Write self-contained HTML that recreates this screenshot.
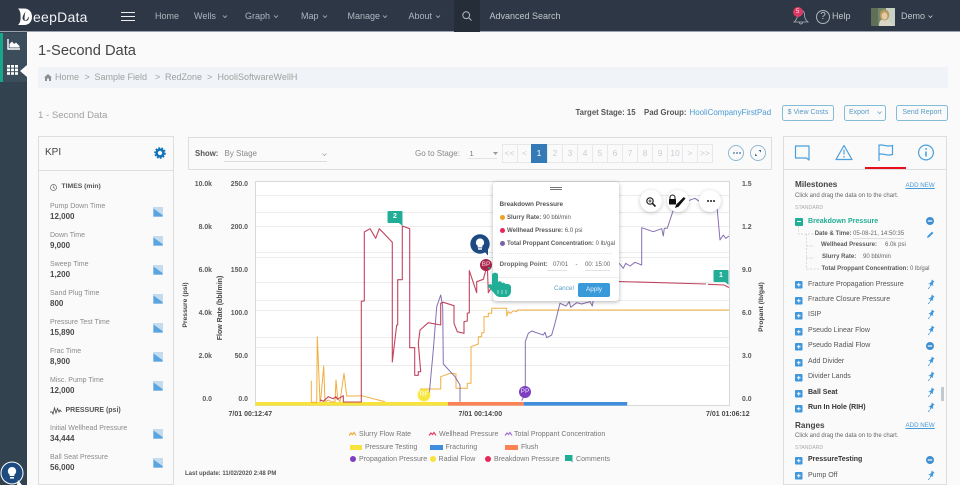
<!DOCTYPE html>
<html>
<head>
<meta charset="utf-8">
<style>
html,body{margin:0;padding:0;width:960px;height:485px;overflow:hidden;background:#fafafa;font-family:"Liberation Sans",sans-serif;color:#555}
.a,.t,.b{position:absolute}
.t{white-space:nowrap;line-height:10px;height:10px;margin-top:.5px}
.b{font-weight:bold}
.n{color:#aeb6bf;font-size:9px}
.kl{font-size:7px;color:#8a8a8a;left:50px}
.kv{font-size:8px;color:#4a4a4a;left:50px;font-weight:bold}
.ax{font-size:6.9px;font-weight:bold;color:#5a5a5a;text-align:right;width:40px}
.li{font-size:7px;color:#555;left:808px}
.lg{font-size:7.05px;color:#777}
.sm{font-size:6.05px;color:#5a5a5a}
.pg{position:absolute;top:145px;height:17px;line-height:17px;width:14px;text-align:center;font-size:8.5px;color:#c9ced3;border:1px solid #e6e8ea;box-sizing:content-box;background:#fafafa;margin-top:-1px}
.btn{position:absolute;top:105px;height:14px;line-height:14px;border:1px solid #84bcd6;border-radius:2.5px;font-size:7px;color:#5b9cc4;text-align:center;box-sizing:content-box}
.rd{position:absolute;border-radius:50%;background:#fff;box-shadow:0 1px 4px rgba(0,0,0,.22);width:22px;height:22px;top:190px}
.g{position:absolute;left:256px;width:473px;height:1px;background:#ececec}
svg{position:absolute;overflow:visible}
</style>
</head>
<body>
<svg width="0" height="0" style="position:absolute">
<defs>
<symbol id="ci" viewBox="0 0 10 10"><rect width="10" height="10" fill="#c5dcef"/><path d="M0.5 1.5L9.5 8V9.5H0.5Z" fill="#5aa5e0"/></symbol>
<symbol id="pl" viewBox="0 0 8 8"><rect width="8" height="8" rx="1" fill="#3f97dc"/><path d="M2 4H6M4 2V6" stroke="#fff" stroke-width="1"/></symbol>
<symbol id="pin" viewBox="0 0 8 10"><path d="M4.5 0.5L7.6 2.6L6.3 3.4L5.8 6L6.5 7L4.6 6.1L2.6 8.5L3.4 5.4L1 4.6L2.8 4.2L4.6 2.2Z" fill="#3f97dc"/><path d="M2.6 8.3L1 10" stroke="#3f97dc" stroke-width=".8"/></symbol>
<symbol id="mn" viewBox="0 0 8 8"><circle cx="4" cy="4" r="4" fill="#3f8fd0"/><rect x="1.8" y="3.4" width="4.4" height="1.2" fill="#fff"/></symbol>
</defs>
</svg>

<!-- sidebar -->
<div class="a" style="left:0;top:32px;width:27px;height:453px;background:#33424f"></div>
<div class="a" style="left:0;top:33px;width:3px;height:49px;background:#17a689"></div>
<div class="a" style="left:3px;top:33px;width:24px;height:49px;background:#3b4c5b"></div>
<svg style="left:7px;top:39px" width="14" height="11" viewBox="0 0 14 11"><path d="M1 0V10H13" fill="none" stroke="#fff" stroke-width="1.4"/><path d="M2.5 8.5V5L5 2.5L7 5L9 3.5L12.5 7V8.5Z" fill="#fff"/></svg>
<svg style="left:7px;top:65px" width="11" height="10" viewBox="0 0 11 10"><g fill="#fff"><rect width="3" height="2.6"/><rect x="4" width="3" height="2.6"/><rect x="8" width="3" height="2.6"/><rect y="3.6" width="3" height="2.6"/><rect x="4" y="3.6" width="3" height="2.6"/><rect x="8" y="3.6" width="3" height="2.6"/><rect y="7.2" width="3" height="2.6"/><rect x="4" y="7.2" width="3" height="2.6"/><rect x="8" y="7.2" width="3" height="2.6"/></g></svg>
<div class="a" style="left:20px;top:65px;width:0;height:0;border-top:6px solid transparent;border-bottom:6px solid transparent;border-right:7px solid #fafafa"></div>
<svg style="left:0;top:461px" width="24" height="24" viewBox="0 0 24 24"><circle cx="12" cy="12" r="11" fill="#1d4a80" stroke="#fff" stroke-width="1"/><path d="M18 19L22 24H17Z" fill="#fff"/><path d="M12 6a4.2 4.2 0 0 0-2.4 7.6V15h4.8v-1.4A4.2 4.2 0 0 0 12 6Z" fill="#fff"/><rect x="10" y="16" width="4" height="1.6" fill="#fff"/></svg>

<!-- nav -->
<div class="a" style="left:0;top:0;width:960px;height:32px;background:#2d3745;border-bottom:1px solid #9aa3ad;box-sizing:border-box"></div>
<div class="a" style="left:454px;top:0;width:26px;height:32px;background:#252d38"></div>
<svg style="left:17px;top:8px" width="16" height="18" viewBox="0 0 16 18"><path d="M1 0.5H7C12 0.5 15 4 15 8.7C15 13.5 12 17 7 17H1C3 15 3.6 13 3.6 9C3.6 4.5 3 2.5 1 0.5Z" fill="#fff"/><path d="M8.5 3.5C7 6 5.5 8 5.5 10.3A3.2 3.2 0 0 0 11.8 10.3C11.8 9.6 11.6 9 11.3 8.4C11 10.8 9.8 12.2 8 12.4C7 11 7.8 6 8.5 3.5Z" fill="#2d3745"/></svg>
<div class="t" style="left:33px;top:10.5px;font-size:14px;line-height:12px;height:12px;color:#f2f4f6;letter-spacing:.25px">eepData</div>
<div class="a" style="left:121px;top:11.5px;width:14px;height:1.6px;background:#eee"></div>
<div class="a" style="left:121px;top:15.5px;width:14px;height:1.6px;background:#eee"></div>
<div class="a" style="left:121px;top:19.5px;width:14px;height:1.6px;background:#eee"></div>
<div class="t n" style="left:155px;top:10.5px">Home</div>
<div class="t n" style="left:194px;top:10.5px">Wells</div>
<div class="t n" style="left:245px;top:10.5px">Graph</div>
<div class="t n" style="left:301px;top:10.5px">Map</div>
<div class="t n" style="left:347.5px;top:10.5px">Manage</div>
<div class="t n" style="left:408.5px;top:10.5px">About</div>
<svg style="left:222px;top:14.5px" width="220" height="4" fill="none" stroke="#aeb6bf" stroke-width=".8"><path d="M1 .5L3 2.5L5 .5M52 .5L54 2.5L56 .5M101 .5L103 2.5L105 .5M161 .5L163 2.5L165 .5M214 .5L216 2.5L218 .5"/></svg>
<svg style="left:462px;top:11px" width="10" height="10" fill="none" stroke="#b5bcc4" stroke-width="1"><circle cx="4.2" cy="4.2" r="3.4"/><path d="M6.8 6.8L9.5 9.5"/></svg>
<div class="t n" style="left:489.5px;top:10.5px;color:#c0c6cc">Advanced Search</div>
<svg style="left:793px;top:7px" width="16" height="17" viewBox="0 0 16 17" fill="none" stroke="#aeb6bf" stroke-width=".8"><path d="M4.5 8C4.5 5 6 3.5 8 3.5S11.5 5 11.5 8C11.5 11 12.5 13 15 15H1C3.5 13 4.5 11 4.5 8Z"/><path d="M6.5 15.5A1.5 1.5 0 0 0 9.5 15.5"/></svg>
<div class="a" style="left:792.5px;top:6.5px;width:10px;height:10px;border-radius:50%;background:#dc3a63;color:#ffd9e2;font-size:6.5px;line-height:10px;text-align:center">5</div>
<div class="a" style="left:816px;top:9.5px;width:12px;height:12px;border:1px solid #aeb6bf;border-radius:50%;color:#c0c6cc;font-size:10px;line-height:12px;text-align:center">?</div>
<div class="t n" style="left:832px;top:10.5px;color:#c0c6cc">Help</div>
<svg style="left:871px;top:8px" width="24" height="18" viewBox="0 0 24 18"><rect width="24" height="18" fill="#74876a"/><rect x="15" width="9" height="18" fill="#c9d0c4"/><rect y="0" width="7" height="18" fill="#5f6f58"/><path d="M8 18C8 13 10 11 13 11S20 13 22 18Z" fill="#dcd8c6"/><ellipse cx="13.5" cy="7" rx="4.8" ry="5.5" fill="#b49a5e"/><ellipse cx="13.5" cy="8" rx="3" ry="3.8" fill="#e5c8a6"/></svg>
<div class="t n" style="left:901px;top:10.5px;color:#c0c6cc">Demo</div>
<svg style="left:928px;top:14.5px" width="6" height="4" fill="none" stroke="#c0c6cc" stroke-width=".8"><path d="M.5 .5L2.5 2.5L4.5 .5"/></svg>

<!-- title -->
<div class="t" style="left:38px;top:41.5px;font-size:14.7px;line-height:18px;height:18px;color:#444">1-Second Data</div>
<div class="a" style="left:37.5px;top:67px;width:910px;height:21px;background:#f0f3f7"></div>
<svg style="left:44px;top:74px" width="8" height="7" viewBox="0 0 8 7"><path d="M4 0L8 3.5H7V7H5V4.5H3V7H1V3.5H0Z" fill="#8f8f8f"/></svg>
<div class="t" style="left:55px;top:71.5px;font-size:9px;color:#a0a0a0">Home</div>
<div class="t" style="left:84.5px;top:71.5px;font-size:9px;color:#a0a0a0">&gt;</div>
<div class="t" style="left:94.5px;top:71.5px;font-size:9px;color:#a0a0a0">Sample Field</div>
<div class="t" style="left:155px;top:71.5px;font-size:9px;color:#a0a0a0">&gt;</div>
<div class="t" style="left:165px;top:71.5px;font-size:9px;color:#a0a0a0">RedZone</div>
<div class="t" style="left:207px;top:71.5px;font-size:9px;color:#a0a0a0">&gt;</div>
<div class="t" style="left:217.5px;top:71.5px;font-size:9px;color:#a0a0a0">HooliSoftwareWellH</div>
<div class="t" style="left:38px;top:110.5px;font-size:9.6px;color:#a0a0a0">1 - Second Data</div>

<div class="t b" style="left:575.5px;top:107.5px;font-size:7.8px;color:#555">Target Stage: 15</div>
<div class="t b" style="left:644px;top:107.5px;font-size:7.8px;color:#555">Pad Group:</div>
<div class="t" style="left:689.5px;top:107.5px;font-size:7.95px;color:#4a9ad4">HooliCompanyFirstPad</div>
<div class="btn" style="left:782px;width:50px">$ View Costs</div>
<div class="btn" style="left:844px;width:40px;text-align:left;text-indent:4px">Export</div>
<svg style="left:877px;top:111px" width="6" height="4" fill="none" stroke="#6fa9cc" stroke-width=".8"><path d="M.5 .5L2.5 2.5L4.5 .5"/></svg>
<div class="btn" style="left:896px;width:50px">Send Report</div>

<!-- KPI -->
<div class="a" style="left:37.5px;top:136px;width:136px;height:349px;border:1px solid #dedede;box-sizing:border-box;background:#fafafa"></div>
<div class="a" style="left:38px;top:170px;width:135px;height:1px;background:#dedede"></div>
<div class="t" style="left:45px;top:147px;font-size:10px;color:#444">KPI</div>
<svg style="left:154px;top:147px" width="12" height="12" viewBox="0 0 12 12"><circle cx="6" cy="6" r="3.4" fill="none" stroke="#0d72b9" stroke-width="2.4"/><circle cx="6" cy="6" r="5" fill="none" stroke="#0d72b9" stroke-width="1.6" stroke-dasharray="1.8 1.3"/></svg>
<svg style="left:49.5px;top:183.5px" width="7" height="7" fill="none" stroke="#666" stroke-width=".7"><circle cx="3.5" cy="3.5" r="3"/><path d="M3.5 1.7V3.7L5 4.4"/></svg>
<div class="t b" style="left:61.5px;top:181.5px;font-size:6.8px;color:#555">TIMES (min)</div>
<div class="t kl" style="top:201px">Pump Down Time</div><div class="t kv" style="top:211.5px">12,000</div>
<div class="t kl" style="top:230px">Down Time</div><div class="t kv" style="top:240px">9,000</div>
<div class="t kl" style="top:259px">Sweep Time</div><div class="t kv" style="top:269px">1,200</div>
<div class="t kl" style="top:288px">Sand Plug Time</div><div class="t kv" style="top:298px">800</div>
<div class="t kl" style="top:317px">Pressure Test Time</div><div class="t kv" style="top:327px">15,890</div>
<div class="t kl" style="top:346px">Frac Time</div><div class="t kv" style="top:356px">8,900</div>
<div class="t kl" style="top:375px">Misc. Pump Time</div><div class="t kv" style="top:385px">12,000</div>
<svg style="left:50px;top:407px" width="12" height="8" fill="none" stroke="#555" stroke-width=".9"><path d="M0 5L2 5L3 7L4.5 1L6 6L7.5 1.5L9 5L10 3L11.5 5"/></svg>
<div class="t b" style="left:65.5px;top:405.5px;font-size:7px;color:#555">PRESSURE (psi)</div>
<div class="t kl" style="top:423.5px">Initial Wellhead Pressure</div><div class="t kv" style="top:433.5px">34,444</div>
<div class="t kl" style="top:452.5px">Ball Seat Pressure</div><div class="t kv" style="top:462.5px">56,000</div>
<svg style="left:153px;top:207px" width="10" height="10"><use href="#ci"/></svg>
<svg style="left:153px;top:236px" width="10" height="10"><use href="#ci"/></svg>
<svg style="left:153px;top:265px" width="10" height="10"><use href="#ci"/></svg>
<svg style="left:153px;top:294px" width="10" height="10"><use href="#ci"/></svg>
<svg style="left:153px;top:323px" width="10" height="10"><use href="#ci"/></svg>
<svg style="left:153px;top:352px" width="10" height="10"><use href="#ci"/></svg>
<svg style="left:153px;top:381px" width="10" height="10"><use href="#ci"/></svg>
<svg style="left:153px;top:429px" width="10" height="10"><use href="#ci"/></svg>
<svg style="left:153px;top:458px" width="10" height="10"><use href="#ci"/></svg>

<!-- chart toolbar -->
<div class="a" style="left:188px;top:136.5px;width:584px;height:33px;border:1px solid #dedede;box-sizing:border-box"></div>
<div class="t b" style="left:195px;top:148px;font-size:7.8px;color:#555">Show:</div>
<div class="t" style="left:224.5px;top:148px;font-size:8px;color:#888">By Stage</div>
<div class="a" style="left:224px;top:161px;width:103px;height:1px;background:#ddd"></div>
<svg style="left:322px;top:153px" width="6" height="4" fill="none" stroke="#aaa" stroke-width=".8"><path d="M.5 .5L2.5 2.5L4.5 .5"/></svg>
<div class="t" style="left:415px;top:148px;font-size:8px;color:#888">Go to Stage:</div>
<div class="t" style="left:469.5px;top:148px;font-size:7.5px;color:#777">1</div>
<div class="a" style="left:468px;top:157.5px;width:29px;height:1px;background:#e5e5e5"></div>
<svg style="left:493px;top:152px" width="5" height="3"><path d="M0 0H5L2.5 3Z" fill="#999"/></svg>
<div class="pg" style="left:501.5px">&lt;&lt;</div>
<div class="pg" style="left:516.5px">&lt;</div>
<div class="pg" style="left:531px;background:#337ab7;border-color:#337ab7;color:#fff">1</div>
<div class="pg" style="left:547px">2</div>
<div class="pg" style="left:562px">3</div>
<div class="pg" style="left:577px">4</div>
<div class="pg" style="left:592px">5</div>
<div class="pg" style="left:607px">6</div>
<div class="pg" style="left:622px">7</div>
<div class="pg" style="left:637px">8</div>
<div class="pg" style="left:652px">9</div>
<div class="pg" style="left:667px">10</div>
<div class="pg" style="left:682px">&gt;</div>
<div class="pg" style="left:697px">&gt;&gt;</div>
<div class="a" style="left:728px;top:145px;width:16px;height:16px;border:1px solid #8fb8d2;border-radius:50%;box-sizing:border-box"></div>
<svg style="left:733px;top:152px" width="8" height="2"><g fill="#3a6f9a"><circle cx="1" cy="1" r=".9"/><circle cx="4" cy="1" r=".9"/><circle cx="7" cy="1" r=".9"/></g></svg>
<div class="a" style="left:750px;top:145px;width:16px;height:16px;border:1px solid #8fb8d2;border-radius:50%;box-sizing:border-box"></div>
<svg style="left:755px;top:150px" width="6" height="6" fill="#3a6f9a"><path d="M6 0V2.5L3.5 0ZM0 6V3.5L2.5 6Z"/></svg>

<!-- plot -->
<div class="a" style="left:255px;top:180.5px;width:474.5px;height:225px;border:1px solid #d8d8d8;box-sizing:border-box;background:#fff"></div>
<div class="g" style="top:195px"></div><div class="g" style="top:212px"></div><div class="g" style="top:226px"></div><div class="g" style="top:252px"></div><div class="g" style="top:257px"></div><div class="g" style="top:282px"></div><div class="g" style="top:300px"></div><div class="g" style="top:310px"></div><div class="g" style="top:337px"></div><div class="g" style="top:347px"></div><div class="g" style="top:365px"></div>

<svg style="left:0;top:0" width="960" height="485" fill="none" stroke-linejoin="round">
<rect x="255.5" y="402" width="192.5" height="3.6" fill="#f7e33c"/>
<rect x="448" y="402" width="75.7" height="3.6" fill="#f98354"/>
<rect x="523.7" y="402" width="103.5" height="3.6" fill="#3f8ddc"/>
<g stroke="#f0a52a" stroke-width="1" stroke-opacity=".9">
<polyline points="311.3,380.7 311.3,402.3 316.7,402.3 317.3,336.7 320,401.7 321,396.7 323.7,366 325,401.7 328.3,400 331.7,402 335,401.7 336,380 337.7,398.3 340,401.7 344,373.3 346.7,396 355,396 361.7,395.7 371.7,398.3 385,401.7"/>
<polyline points="420,389 440.7,389 440.7,376.7 450,373.3 456,374 456,388.3 467.3,388.3 467.3,383.3 471,383.3 471,346.7 478.3,344 478.3,336.7 481.7,336.7 481.7,332.7 484,332.7 484,316.7 488.3,316.7 488.3,313.3 491.7,313.3 491.7,308.3 506.7,308.3 506.7,316 508.3,311.7 510.7,313.3 513.3,310.7 516.7,311.7 517.3,310 729,310"/>
</g>
<g stroke="#7a5fa8" stroke-width="1" stroke-opacity=".9">
<polyline points="429.3,393.3 433.3,350 436.7,306.7 440.7,295 442.7,306.7 443.3,364 455,376.7 460,385 460,401.7"/>
<polyline points="521.7,400.7 525.3,393.3 525.3,341.7 528.3,333.3 531.7,331 538.3,333.3 543.3,335 545,332.3 546.7,337.7 551.7,335 555,323.3 558.3,310 560,303.3 566,306 569.3,301.7 570.7,307.3 576.7,302.7 581.7,304 590,301.7 592.3,306 593.3,300"/>
<polyline points="619.3,263.3 623.3,268.3 625.7,263.3 630,266 635,262.3 641.7,265 641.7,227.7 653.3,231.7 661.7,228.7 663.3,236 664.3,228.3 667.3,228.3 673.3,210 680,197 688.3,200.7 695,198.3 698.3,200.7 717.3,201.7 717.3,210 720,240 723.3,235 725.7,238.3 729,236"/>
</g>
<g stroke="#bb3050" stroke-width="1.1" stroke-opacity=".9">
<polyline points="320,401.3 320.7,400 323.3,401.3 328.3,396.7 333.3,398.7 336,396.7 337.3,399.3 341.7,396.7 343.3,395.7 343.3,402 361.3,402 361.3,301.3 364.3,301 364.3,232 370,228.7 375.7,238.3 379.3,228.7 392.3,242.3 392.3,362 395.7,333.3 396.7,325 397.7,325 397.7,279.7 402.3,279.7 402.3,226 409.7,228.7 409.7,347.7 414.7,347.7 414.7,375.3 418.3,375.3 418.3,371.7 420.7,371.7 418.3,343.3 420,330 428.3,322.7 440.7,325 440.7,303.3 443.3,302.3 454,305.7 454,323.3 457.3,331.7 464,333.3 464,321.7 467.3,321 467.3,313.3 469.3,312.7 469.3,270.7 476.7,292.7 476.7,281.7 483.3,279.3 487.3,265 488.3,292.7 491.7,286.7"/>
<polyline points="619,281.5 706,284"/>
<polyline points="708,284.3 724,285 729,287.5"/>
</g>
</svg>

<!-- markers -->
<svg style="left:387px;top:211px" width="16" height="16"><path d="M1.5 0H14.5A1 1 0 0 1 15.5 1V15L12 12H1.5A1 1 0 0 1 .5 11V1A1 1 0 0 1 1.5 0Z" fill="#21ad96"/></svg>
<div class="a b" style="left:388px;top:212px;width:14px;line-height:10px;font-size:7px;color:#fff;text-align:center">2</div>
<svg style="left:713px;top:270px" width="16" height="16"><path d="M1.5 0H14.5A1 1 0 0 1 15.5 1V15L12 12H1.5A1 1 0 0 1 .5 11V1A1 1 0 0 1 1.5 0Z" fill="#21ad96"/></svg>
<div class="a b" style="left:714px;top:271px;width:14px;line-height:10px;font-size:7px;color:#fff;text-align:center">1</div>
<div class="a" style="left:418px;top:389px;width:12px;height:12px;border-radius:50%;background:#f7e63c;box-shadow:0 0 2px #f7e63c;color:#fff;font-size:6.5px;line-height:12px;text-align:center">RF</div>
<div class="a" style="left:519px;top:386px;width:12px;height:12px;border-radius:50%;background:#7d3fc0;color:#ecdfff;font-size:6.5px;line-height:12px;text-align:center">PP</div>
<div class="a" style="left:480px;top:259px;width:12px;height:12px;border-radius:50%;background:#a8244a;color:#f5d5de;font-size:6.5px;line-height:12px;text-align:center">BP</div>
<svg style="left:470px;top:234px" width="21" height="22" viewBox="0 0 21 22"><circle cx="10" cy="10" r="9.7" fill="#1d4a80"/><path d="M14 17L18 21.5V15Z" fill="#1d4a80"/><path d="M10 4.5a4 4 0 0 0-2.3 7.3V13.5h4.6V11.8A4 4 0 0 0 10 4.5Z" fill="#fff"/><rect x="8" y="14.2" width="4" height="1.5" fill="#fff"/></svg>

<!-- axes -->
<div class="t ax" style="left:172px;top:179px">10.0k</div><div class="t ax" style="left:172px;top:222px">8.0k</div><div class="t ax" style="left:172px;top:265px">6.0k</div><div class="t ax" style="left:172px;top:308px">4.0k</div><div class="t ax" style="left:172px;top:351px">2.0k</div><div class="t ax" style="left:172px;top:394px">0.0</div>
<div class="t ax" style="left:208px;top:179px">250.0</div><div class="t ax" style="left:208px;top:222px">200.0</div><div class="t ax" style="left:208px;top:265px">150.0</div><div class="t ax" style="left:208px;top:308px">100.0</div><div class="t ax" style="left:208px;top:351px">50.0</div><div class="t ax" style="left:208px;top:394px">0.0</div>
<div class="t ax" style="left:742px;top:179px;text-align:left">1.5</div><div class="t ax" style="left:742px;top:222.5px;text-align:left">1.2</div><div class="t ax" style="left:742px;top:265.5px;text-align:left">9.0</div><div class="t ax" style="left:742px;top:308px;text-align:left">6.0</div><div class="t ax" style="left:742px;top:351.5px;text-align:left">3.0</div><div class="t ax" style="left:742px;top:394.5px;text-align:left">0.0</div>
<div class="t b" style="left:155.5px;top:299px;width:60px;text-align:center;font-size:6.8px;color:#444;transform:rotate(-90deg)">Pressure (psi)</div>
<div class="t b" style="left:181px;top:302px;width:80px;text-align:center;font-size:7px;color:#444;transform:rotate(-90deg)">Flow Rate (bbl/min)</div>
<div class="t b" style="left:731.5px;top:301px;width:60px;text-align:center;font-size:6.8px;color:#444;transform:rotate(-90deg)">Propant (lb/gal)</div>
<div class="t b" style="left:228.5px;top:409px;font-size:7px;color:#484848">7/01 00:12:47</div>
<div class="t b" style="left:458.5px;top:409px;font-size:7px;color:#484848">7/01 00:14:00</div>
<div class="t b" style="left:706px;top:409px;font-size:7px;color:#484848">7/01 01:06:12</div>

<!-- legend -->
<svg style="left:348px;top:431px" width="170" height="6" fill="none" stroke-width="1.1"><path d="M1 4.5L3 2L4.5 3.5L6 1.5L8 4.5" stroke="#f0a52a"/><path d="M81 4.5L83 2L84.5 3.5L86 1.5L88 4.5" stroke="#e6325c"/><path d="M157 4.5L159 2L160.5 3.5L162 1.5L164 4.5" stroke="#9b6ad0"/></svg>
<div class="t lg" style="left:359px;top:429px">Slurry Flow Rate</div>
<div class="t lg" style="left:439px;top:429px">Wellhead Pressure</div>
<div class="t lg" style="left:514px;top:429px">Total Proppant Concentration</div>
<div class="a" style="left:350px;top:445px;width:12px;height:5px;background:#f7e33c"></div>
<div class="a" style="left:430px;top:445px;width:13px;height:5px;background:#3f8ddc"></div>
<div class="a" style="left:505px;top:445px;width:13px;height:5px;background:#f98354"></div>
<div class="t lg" style="left:365px;top:442px">Pressure Testing</div>
<div class="t lg" style="left:445.5px;top:442px">Fracturing</div>
<div class="t lg" style="left:521px;top:442px">Flush</div>
<div class="a" style="left:350px;top:456px;width:6px;height:6px;border-radius:50%;background:#7d3fc0"></div>
<div class="a" style="left:430px;top:456px;width:6px;height:6px;border-radius:50%;background:#f7e33c"></div>
<div class="a" style="left:485px;top:456px;width:6px;height:6px;border-radius:50%;background:#e8265a"></div>
<svg style="left:565px;top:455px" width="8" height="8"><path d="M0 0H7.5V7.5L6 6H0Z" fill="#21ad96"/></svg>
<div class="t lg" style="left:359px;top:454px">Propagation Pressure</div>
<div class="t lg" style="left:438.5px;top:454px">Radial Flow</div>
<div class="t lg" style="left:494px;top:454px">Breakdown Pressure</div>
<div class="t lg" style="left:576px;top:454px">Comments</div>
<div class="t b" style="left:185px;top:468px;font-size:6px;color:#555">Last update: 11/02/2020 2:48 PM</div>

<!-- tooltip -->
<div class="a" style="left:492.5px;top:181.5px;width:126.5px;height:119px;background:#fff;border-radius:3px;box-shadow:0 1px 4px rgba(0,0,0,.3)"></div>
<div class="a" style="left:550px;top:187px;width:12px;height:2.6px;border-top:.8px solid #777;border-bottom:.8px solid #777;box-sizing:border-box"></div>
<div class="t b" style="left:499.5px;top:199px;font-size:6.4px;color:#555">Breakdown Pressure</div>
<div class="a" style="left:499.5px;top:215px;width:5px;height:5px;border-radius:50%;background:#f0a020"></div>
<div class="a" style="left:499.5px;top:228px;width:5px;height:5px;border-radius:50%;background:#e8265a"></div>
<div class="a" style="left:499.5px;top:241px;width:5px;height:5px;border-radius:50%;background:#7a5fa8"></div>
<div class="t sm" style="left:507px;top:212px"><b>Slurry Rate:</b> 90 bbl/min</div>
<div class="t sm" style="left:507px;top:225px"><b>Wellhead Pressure:</b> 6.0 psi</div>
<div class="t sm" style="left:507px;top:238px"><b>Total Proppant Concentration:</b> 0 lb/gal</div>
<div class="a" style="left:499px;top:253px;width:113px;border-top:1px dotted #e3e3e3"></div>
<div class="t b" style="left:499.5px;top:259px;font-size:6.4px;color:#666">Dropping Point:</div>
<div class="t sm" style="left:553px;top:259px;color:#666">07/01</div>
<div class="t sm" style="left:575.5px;top:259px;color:#666">-</div>
<div class="t sm" style="left:585px;top:259px;color:#666">00: 15:00</div>
<div class="a" style="left:547px;top:270px;width:20px;height:1px;background:#e2e2e2"></div>
<div class="a" style="left:585px;top:270px;width:25px;height:1px;background:#e2e2e2"></div>
<div class="a" style="left:493px;top:277px;width:126px;height:1px;background:#eee"></div>
<div class="t" style="left:554px;top:283.5px;font-size:6.4px;color:#5a9fc8">Cancel</div>
<div class="a" style="left:578px;top:282.5px;width:32px;height:14px;background:#3a9ad9;border-radius:2px;color:#e8f4fc;font-size:6.4px;line-height:14px;text-align:center">Apply</div>
<svg style="left:487px;top:268px" width="26" height="30" viewBox="0 0 26 30"><path d="M5 7C5 4 11 4 11 7V14C12.5 12.5 14.5 13.5 15 15C16.5 14 18 15 18.5 16C20 15.5 24 16 24 19V23C24 26 22 29 18.5 29H13C10 29 8.5 27 7 25L1.5 19C.5 17 3 15 5 17Z" fill="#21ad96"/><path d="M11 22V26M15 22V26M19 22V26" stroke="#bfe8df" stroke-width=".8"/><path d="M1 0H3M2 -1V1" stroke="#21ad96"/></svg>

<!-- round buttons -->
<div class="rd" style="left:639.5px"></div>
<div class="rd" style="left:667px"></div>
<div class="rd" style="left:699px"></div>
<svg style="left:646px;top:197px" width="10" height="10" fill="none" stroke="#222" stroke-width="1.2"><circle cx="4" cy="4" r="3.2"/><path d="M6.5 6.5L9.5 9.5" stroke-width="1.6"/><path d="M2.4 4H5.6M4 2.4V5.6" stroke-width=".8"/></svg>
<svg style="left:669px;top:194px" width="18" height="15" viewBox="0 0 18 15"><path d="M1 5.5V3.5A2.5 2.5 0 0 1 6 3.5V5.5" fill="none" stroke="#111" stroke-width="1"/><rect x="0" y="5" width="7" height="5.5" rx=".6" fill="#111"/><path d="M16.5 4.5L14.8 3L7.2 10.5L6 14L9.5 12.8Z" fill="#111"/></svg>
<svg style="left:706.5px;top:200px" width="8" height="2"><g fill="#222"><circle cx="1" cy="1" r="1"/><circle cx="4" cy="1" r="1"/><circle cx="7" cy="1" r="1"/></g></svg>

<!-- right panel -->
<div class="a" style="left:782.5px;top:136px;width:164px;height:349px;border:1px solid #dedede;box-sizing:border-box;background:#fafafa"></div>
<div class="a" style="left:783px;top:169px;width:163px;height:1px;background:#dedede"></div>
<div class="a" style="left:864.5px;top:167px;width:41px;height:2.2px;background:#e8101c"></div>
<svg style="left:790px;top:143px" width="150" height="20" fill="none" stroke="#4a9fdd" stroke-width="1.2">
<path d="M6 2H19.5V16L17 14H6V2Z" stroke-linejoin="round" transform="translate(-0.5,1)"/>
<path d="M54 2.5L62 16.5H46Z" stroke-linejoin="round"/><path d="M54 6.8V11.5M54 13V14.6"/>
<path d="M89 1.5V18M89 2.5C93 .5 96 4.5 102.5 2.5V11.5C96 13.5 93 9.5 89 11.5"/>
<circle cx="136" cy="9.5" r="7.4"/><path d="M136 8.5V13.5" stroke-width="1.6"/><path d="M136 5.2V6.8" stroke-width="1.6"/>
</svg>
<div class="t b" style="left:795px;top:179.5px;font-size:8.2px;color:#444">Milestones</div>
<div class="t" style="left:905.5px;top:180px;font-size:6.2px;color:#4a9ad4;text-decoration:underline">ADD NEW</div>
<div class="t" style="left:795px;top:190px;font-size:6px;color:#666">Click and drag the data on to the chart.</div>
<div class="t" style="left:795px;top:202.5px;font-size:5.2px;color:#aaa">STANDARD</div>
<div class="a" style="left:795px;top:218px;width:7.5px;height:7.5px;background:#21ad96;border-radius:1px"></div>
<div class="a" style="left:796.5px;top:221.4px;width:4.5px;height:1px;background:#fff"></div>
<div class="t b" style="left:808px;top:216px;font-size:7.05px;color:#21ad96">Breakdown Pressure</div>
<svg style="left:926px;top:217px" width="8" height="8"><use href="#mn"/></svg>
<svg style="left:927px;top:231px" width="7" height="7"><path d="M0 7L.6 5L5 .6L6.4 2L2 6.4Z" fill="#3f97dc"/></svg>
<svg style="left:798px;top:226px" width="26" height="46" fill="none" stroke="#ccc" stroke-width=".7" stroke-dasharray="2 1.5"><path d="M.5 0V8H16M8.5 8V43H22M8.5 20H16M8.5 32H16"/></svg>
<div class="t sm" style="left:814.7px;top:228.2px"><b>Date &amp; Time:</b></div>
<div class="t sm" style="left:853px;top:228.2px;color:#666">05-08-21, 14:50:35</div>
<div class="a" style="left:853px;top:238px;width:51px;height:1px;background:#e0e0e0"></div>
<div class="t sm" style="left:821px;top:239.8px"><b>Wellhead Pressure:</b></div><div class="t sm" style="left:885px;top:239.8px;color:#666">6.0k psi</div>
<div class="t sm" style="left:822px;top:251.8px"><b>Slurry Rate:</b></div><div class="t sm" style="left:863px;top:251.8px;color:#666">90 bbl/min</div>
<div class="t sm" style="left:821.5px;top:263.8px"><b>Total Proppant Concentration:</b></div><div class="t sm" style="left:910px;top:263.8px;color:#666">0 lb/gal</div>

<div class="t li" style="top:279.2px">Fracture Propagation Pressure</div>
<div class="t li" style="top:294.5px">Fracture Closure Pressure</div>
<div class="t li" style="top:309.8px">ISIP</div>
<div class="t li" style="top:325.5px">Pseudo Linear Flow</div>
<div class="t li" style="top:340.8px">Pseudo Radial Flow</div>
<div class="t li" style="top:356.5px">Add Divider</div>
<div class="t li" style="top:371.8px">Divider Lands</div>
<div class="t li" style="top:387.5px;font-weight:bold;color:#333">Ball Seat</div>
<div class="t li" style="top:402.8px;font-weight:bold;color:#333">Run In Hole (RIH)</div>
<svg style="left:795px;top:281px" width="7.5" height="7.5"><use href="#pl"/></svg>
<svg style="left:795px;top:296.5px" width="7.5" height="7.5"><use href="#pl"/></svg>
<svg style="left:795px;top:312px" width="7.5" height="7.5"><use href="#pl"/></svg>
<svg style="left:795px;top:327.5px" width="7.5" height="7.5"><use href="#pl"/></svg>
<svg style="left:795px;top:343px" width="7.5" height="7.5"><use href="#pl"/></svg>
<svg style="left:795px;top:358.5px" width="7.5" height="7.5"><use href="#pl"/></svg>
<svg style="left:795px;top:374px" width="7.5" height="7.5"><use href="#pl"/></svg>
<svg style="left:795px;top:389.5px" width="7.5" height="7.5"><use href="#pl"/></svg>
<svg style="left:795px;top:404.5px" width="7.5" height="7.5"><use href="#pl"/></svg>
<svg style="left:926.5px;top:278.5px" width="8" height="10"><use href="#pin"/></svg>
<svg style="left:926.5px;top:294px" width="8" height="10"><use href="#pin"/></svg>
<svg style="left:926.5px;top:309px" width="8" height="10"><use href="#pin"/></svg>
<svg style="left:926.5px;top:325px" width="8" height="10"><use href="#pin"/></svg>
<svg style="left:926px;top:341.5px" width="8" height="8"><use href="#mn"/></svg>
<svg style="left:926.5px;top:355.5px" width="8" height="10"><use href="#pin"/></svg>
<svg style="left:926.5px;top:371px" width="8" height="10"><use href="#pin"/></svg>
<svg style="left:926.5px;top:386.5px" width="8" height="10"><use href="#pin"/></svg>
<svg style="left:926.5px;top:402px" width="8" height="10"><use href="#pin"/></svg>
<div class="a" style="left:941px;top:387px;width:2.5px;height:14px;background:#c4c8cf"></div>

<div class="t b" style="left:795px;top:420.5px;font-size:8.2px;color:#444">Ranges</div>
<div class="t" style="left:905.5px;top:420px;font-size:6.2px;color:#4a9ad4;text-decoration:underline">ADD NEW</div>
<div class="t" style="left:795px;top:430.8px;font-size:6px;color:#666">Click and drag the data on to the chart.</div>
<div class="t" style="left:795px;top:442.5px;font-size:5.2px;color:#aaa">STANDARD</div>
<div class="t li" style="top:454.8px;font-weight:bold;color:#333">PressureTesting</div>
<div class="t li" style="top:470.5px">Pump Off</div>
<svg style="left:795px;top:456.5px" width="7.5" height="7.5"><use href="#pl"/></svg>
<svg style="left:795px;top:472px" width="7.5" height="7.5"><use href="#pl"/></svg>
<svg style="left:926px;top:456px" width="8" height="8"><use href="#mn"/></svg>
<svg style="left:926.5px;top:469.5px" width="8" height="10"><use href="#pin"/></svg>
</body>
</html>
